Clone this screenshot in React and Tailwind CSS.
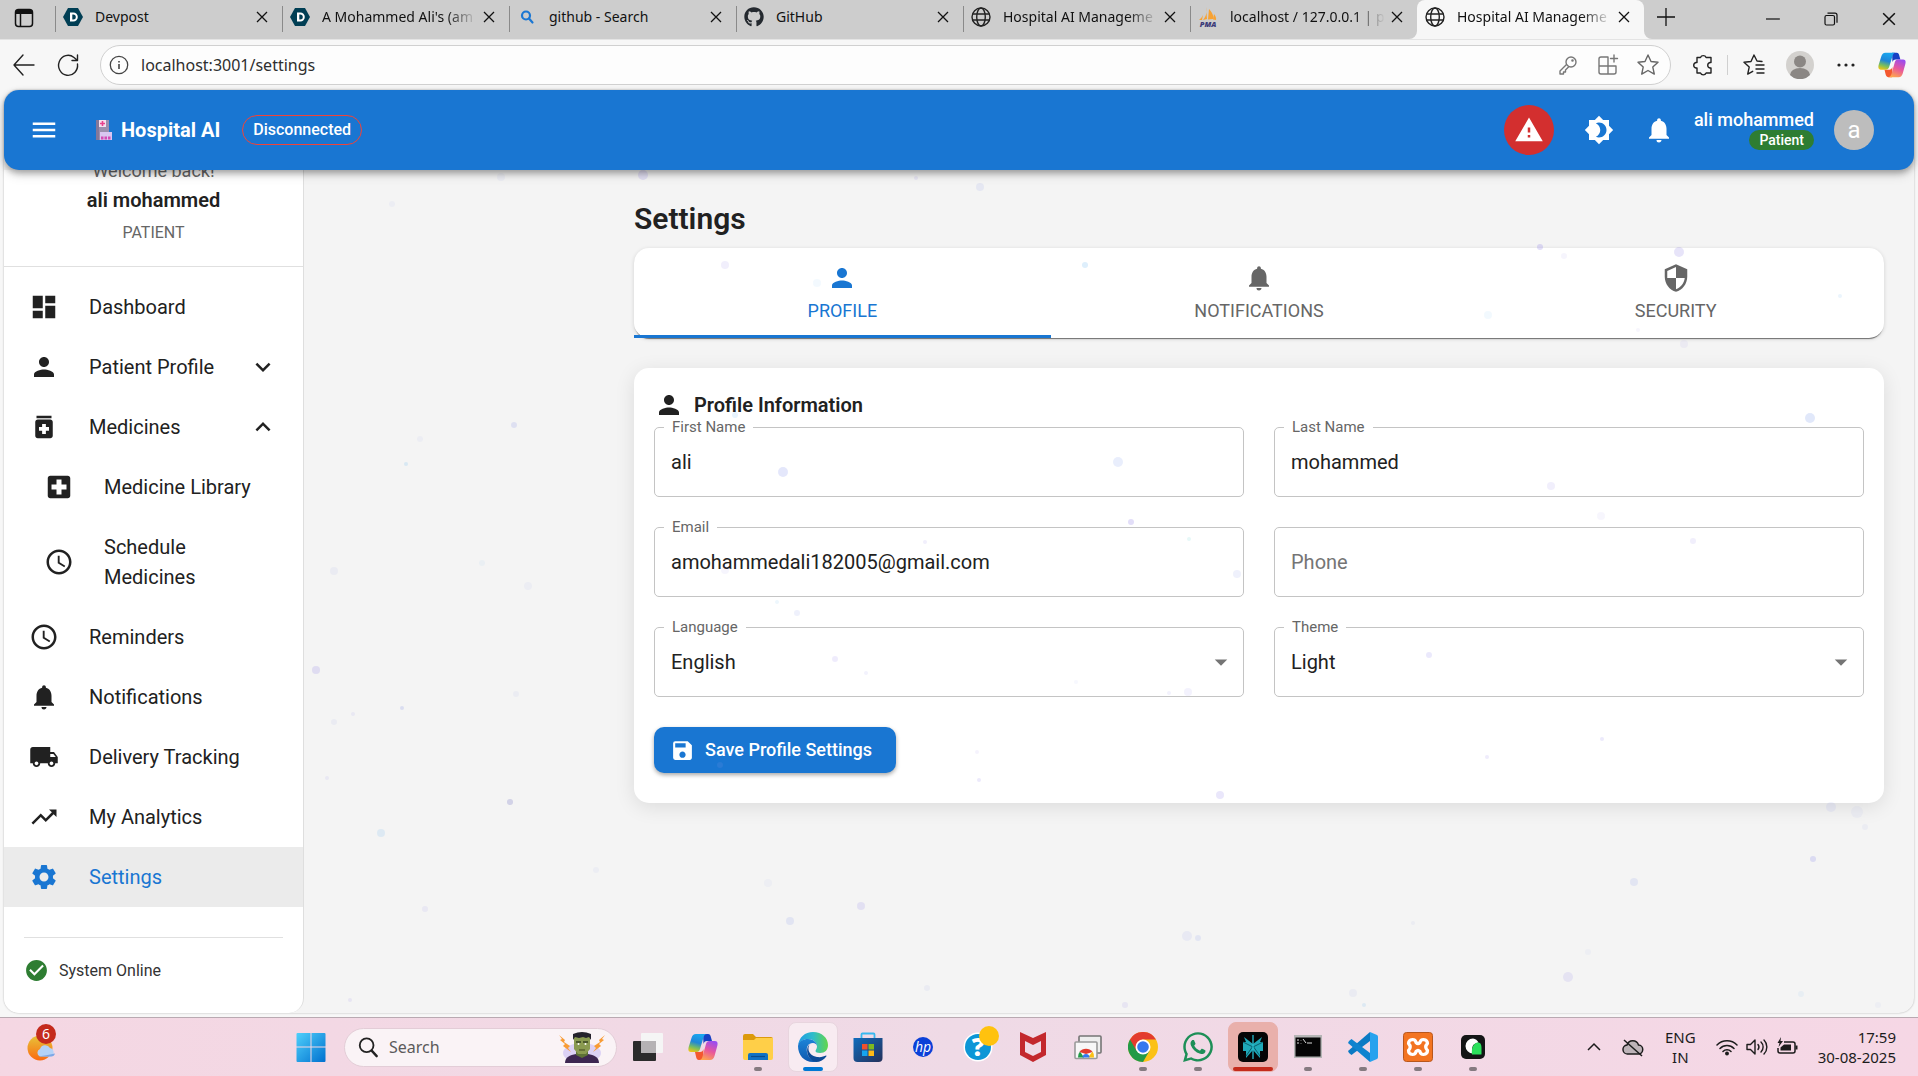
import React, { useState } from 'react';
import {
  MdArrowDropDown,
  MdBrightness4,
  MdCheckCircle,
  MdDashboard,
  MdExpandLess,
  MdExpandMore,
  MdLocalHospital,
  MdLocalShipping,
  MdMedication,
  MdMenu,
  MdNotifications,
  MdPerson,
  MdSave,
  MdSchedule,
  MdSecurity,
  MdSettings,
  MdTrendingUp,
  MdWarning,
} from 'react-icons/md';
import { FaGithub, FaWhatsapp } from 'react-icons/fa';

/* ---------- Browser icons ---------- */

const DevpostIcon = () => (
  <svg viewBox="0 0 20 20" className="size-5">
    <path d="M5 1h10l5 9-5 9H5L0 10z" fill="#003e54" />
    <path d="M7 5.500h3.300a4.500 4.500 0 0 1 0 9H7zM9.300 7.500v5h1a2.500 2.500 0 0 0 0-5z" fill="#fff" fillRule="evenodd" />
  </svg>
);

const SearchFavicon = () => (
  <svg viewBox="0 0 20 20" className="size-5" fill="none" stroke="#1b77d3" strokeWidth="2.200" strokeLinecap="round">
    <circle cx="9" cy="8.500" r="4" />
    <path d="M12 11.500l3.500 4" />
  </svg>
);

const GlobeIcon = () => (
  <svg viewBox="0 0 20 20" className="size-5" fill="none" stroke="#222" strokeWidth="1.400">
    <circle cx="10" cy="10" r="9" />
    <ellipse cx="10" cy="10" rx="4.300" ry="9" />
    <path d="M1.500 7h17M1.500 13h17" />
  </svg>
);

const PmaIcon = () => (
  <svg viewBox="0 0 20 20" className="size-5">
    <path d="M8 0c1 5 .5 9-3 13l4-1zM11 2c3 3 5 7 4 10l-5 .5zM16 7c1.500 2 2.500 4 2 6l-3-.5zM5 8c-1 2-2.500 4-4 5l3 0z" fill="#f7a233" />
    <text x="10" y="19.500" fontSize="7.500" fontWeight="800" fontStyle="italic" textAnchor="middle" fill="#3b3a78" fontFamily="Open Sans, sans-serif">PMA</text>
  </svg>
);

const CloseIcon = ({ className = 'size-3' }) => (
  <svg viewBox="0 0 12 12" className={className} fill="none" stroke="#111" strokeWidth="1.300">
    <path d="M1 1l10 10M11 1L1 11" />
  </svg>
);

const LineIcon = ({ children, color = '#222', className = 'size-6' }) => (
  <svg viewBox="0 0 24 24" className={className} fill="none" stroke={color} strokeWidth="1.400" strokeLinecap="round" strokeLinejoin="round">
    {children}
  </svg>
);

const CopilotIcon = ({ className = 'size-[30px]' }) => (
  <svg viewBox="0 0 30 30" className={className}>
    <defs>
      <linearGradient id="cpLeft" x1="0.500" y1="0" x2="0.200" y2="1">
        <stop offset="0" stopColor="#1aa6ee" />
        <stop offset="0.450" stopColor="#1f86d8" />
        <stop offset="0.750" stopColor="#7cbf5a" />
        <stop offset="1" stopColor="#f2c414" />
      </linearGradient>
      <linearGradient id="cpRight" x1="0.700" y1="0" x2="0.300" y2="1">
        <stop offset="0" stopColor="#9a4cf0" />
        <stop offset="0.500" stopColor="#e8579c" />
        <stop offset="1" stopColor="#ffa64d" />
      </linearGradient>
    </defs>
    <path d="M15 2h5c2 0 2.500 1.500 3 3.500L24 9h-5c-2 0-3 1-3.500 3z" fill="#1740c4" />
    <path d="M15 28h-4c-2 0-2.500-1.500-3-3.500L7 20h5c2 0 3-1 3.500-3z" fill="#f4582f" />
    <path d="M8 2h11c-2 0-3 1.500-3.500 3.500L12 17c-.6 2-1.500 3-3.500 3H3c-3 0-3-3-2-6l2.500-8C4.300 3.500 5.500 2 8 2z" fill="url(#cpLeft)" />
    <path d="M22 28H11c2 0 3-1.500 3.500-3.500L18 12c.6-2 1.500-3 3.500-3H27c3 0 3 3 2 6l-2.500 9c-.8 2.500-2 4-4.500 4z" fill="url(#cpRight)" />
  </svg>
);

/* ---------- Browser chrome ---------- */

const browserTabs = [
  { title: 'Devpost', icon: <DevpostIcon /> },
  { title: "A Mohammed Ali's (am", icon: <DevpostIcon />, faded: true },
  { title: 'github - Search', icon: <SearchFavicon /> },
  { title: 'GitHub', icon: <FaGithub className="size-5 text-[#24292f]" /> },
  { title: 'Hospital AI Manageme', icon: <GlobeIcon />, faded: true },
  { title: 'localhost / 127.0.0.1 | p', icon: <PmaIcon />, faded: true },
  { title: 'Hospital AI Manageme', icon: <GlobeIcon />, faded: true, active: true },
];

const BrowserTab = ({ tab }) => (
  <div
    className={`relative flex h-full w-[227px] min-w-0 items-center pb-1.5 pl-2 pr-3.5 ${
      tab.active ? 'rounded-t-lg bg-[#f7f7f7]' : ''
    }`}
  >
    {!tab.active && <span className="absolute left-0 top-1.5 h-[26px] w-px bg-[#8a8a8a]" />}
    {tab.active && (
      <>
        <svg viewBox="0 0 8 8" className="absolute -left-2 bottom-0 size-2"><path d="M8 0v8H0a8 8 0 0 0 8-8z" fill="#f7f7f7" /></svg>
        <svg viewBox="0 0 8 8" className="absolute -right-2 bottom-0 size-2"><path d="M0 0v8h8a8 8 0 0 1-8-8z" fill="#f7f7f7" /></svg>
      </>
    )}
    <span className="shrink-0">{tab.icon}</span>
    <span
      className={`ml-3 mr-1.5 flex-1 overflow-hidden whitespace-nowrap ${
        tab.faded ? '[mask-image:linear-gradient(to_right,#000_80%,transparent)]' : ''
      }`}
    >
      {tab.title}
    </span>
    <button aria-label="Close tab" className="shrink-0"><CloseIcon /></button>
  </div>
);

const TabStrip = () => (
  <div className="flex h-[39px] items-center bg-[#cdcdcd] font-['Noto_Sans',sans-serif] text-sm text-[#111]">
    <button aria-label="Tab actions" className="flex w-[55px] shrink-0 justify-center pr-2 pb-1">
      <svg viewBox="0 0 20 20" className="size-5" fill="none" stroke="#111" strokeWidth="1.500">
        <rect x="1.500" y="1.500" width="17" height="17" rx="3" />
        <path d="M2 4h16" strokeWidth="4" />
        <path d="M6.500 6v12" />
      </svg>
    </button>
    {browserTabs.map((tab, i) => (
      <BrowserTab key={i} tab={tab} />
    ))}
    <button aria-label="New tab" className="ml-3 shrink-0 pb-1.5">
      <svg viewBox="0 0 20 20" className="size-5" stroke="#111" strokeWidth="1.300"><path d="M1 10h18M10 1v18" /></svg>
    </button>
    <div className="ml-auto flex shrink-0 pb-0.5">
      <button aria-label="Minimize" className="flex w-[58px] justify-center">
        <svg viewBox="0 0 14 14" className="size-3.5" stroke="#111" strokeWidth="1.200"><path d="M0 7h14" /></svg>
      </button>
      <button aria-label="Restore" className="flex w-[58px] justify-center">
        <svg viewBox="0 0 14 14" className="size-3.5" fill="none" stroke="#111" strokeWidth="1.200">
          <rect x="1" y="3.500" width="9.500" height="9.500" rx="1.500" />
          <path d="M3.500 1.200h7.500a2 2 0 0 1 2 2v7.500" />
        </svg>
      </button>
      <button aria-label="Close" className="flex w-[58px] justify-center"><CloseIcon className="size-3.5" /></button>
    </div>
  </div>
);

const AddressBar = () => (
  <div className="flex h-[51px] items-center border-t border-[#e4e4e4] bg-[#f7f7f7] pl-3 pr-3 font-['Noto_Sans',sans-serif]">
    <button aria-label="Back">
      <LineIcon><path d="M22 12H2M11 2L2 12l9 10" /></LineIcon>
    </button>
    <button aria-label="Refresh" className="ml-5">
      <LineIcon><path d="M21.500 11a9.500 10 0 1 1-3.500-6.500L21 7M21.500 2v5.500H16" /></LineIcon>
    </button>
    <div className="ml-5 flex h-10 flex-1 items-center rounded-full border border-[#d0d0d0] bg-[#fdfdfd] pl-2 pr-2.5">
      <svg viewBox="0 0 20 20" className="size-5" fill="none" stroke="#444" strokeWidth="1.300">
        <circle cx="10" cy="10" r="8.700" />
        <path d="M10 9v5M10 6v1.500" strokeWidth="1.600" />
      </svg>
      <input
        aria-label="Address"
        defaultValue="localhost:3001/settings"
        className="ml-3 flex-1 bg-transparent text-base text-[#2e2e2e] outline-none"
      />
      <div className="flex gap-4">
        <LineIcon color="#777">
          <circle cx="15" cy="9" r="5" />
          <circle cx="16.500" cy="7.500" r="0.600" />
          <path d="M10.500 11.500L4 18v3h3.500v-2h2v-2l3-3" />
        </LineIcon>
        <LineIcon color="#777">
          <path d="M12 4H5a2 2 0 0 0-2 2v13a2 2 0 0 0 2 2h13a2 2 0 0 0 2-2v-6H3M12 4v17M18 2v7M14.500 5.500h7" />
        </LineIcon>
        <LineIcon color="#666">
          <path d="M12 2l3 6.500 7 .8-5.200 4.800 1.500 7L12 17.500 5.700 21.100l1.500-7L2 9.300l7-.8z" />
        </LineIcon>
      </div>
    </div>
    <button aria-label="Extensions" className="ml-5">
      <LineIcon>
        <path d="M6 4.500h3.500a3 3 0 0 1 5.600 0H20v5h-1a2.800 2.800 0 0 0 0 5.500h1v5h-4.900a3 3 0 0 1-5.600 0H6v-5H5a2.800 2.800 0 0 1 0-5.500h1z" />
      </LineIcon>
    </button>
    <span className="ml-3 h-5 w-px bg-[#d0d0d0]" />
    <button aria-label="Favorites" className="ml-3.5">
      <LineIcon>
        <path d="M20 8.500l-5-.5-3-6-3 6.500-7 .8 5.200 4.800-1.500 7 5-2.800M14 12h8M14 16h8M15 20h7" />
      </LineIcon>
    </button>
    <svg viewBox="0 0 28 28" className="ml-5 size-7">
      <circle cx="14" cy="14" r="14" fill="#d3d1ce" />
      <circle cx="14" cy="10.500" r="6" fill="#8b8784" />
      <path d="M4 24a10 7 0 0 1 20 0 14 14 0 0 1-20 0z" fill="#8b8784" />
    </svg>
    <button aria-label="More" className="ml-5">
      <svg viewBox="0 0 24 24" className="size-6" fill="#222"><circle cx="5" cy="12" r="1.600" /><circle cx="12" cy="12" r="1.600" /><circle cx="19" cy="12" r="1.600" /></svg>
    </button>
    <button aria-label="Copilot" className="ml-5"><CopilotIcon className="size-7" /></button>
  </div>
);

/* ---------- Application ---------- */

const HospitalIcon = () => (
  <svg viewBox="0 0 18 20" className="h-5 w-[18px]">
    <path d="M1 0h13v20H1z" fill="#9b8fae" />
    <path d="M1 0h3v20H1z" fill="#83789a" />
    <rect x="4" y="0" width="7" height="7" fill="#f6dfee" />
    <path d="M7.500 1v5M5 3.500h5" stroke="#e8408c" strokeWidth="1.600" />
    <rect x="5" y="12" width="12" height="8" fill="#d9c6f2" />
    <path d="M6 18h10" stroke="#d34bb4" strokeWidth="3" strokeDasharray="2.500 1" />
  </svg>
);

const AppHeader = () => (
  <header className="relative z-20 flex h-20 items-center rounded-[15px] bg-[#1976d2] pl-[25px] pr-10 text-white shadow-[0_3px_6px_rgba(0,0,0,0.3),0_5px_12px_rgba(0,0,0,0.12)]">
    <button aria-label="Open menu"><MdMenu className="size-[30px]" /></button>
    <div className="ml-9 flex items-center gap-2">
      <HospitalIcon />
      <span className="text-xl font-bold">Hospital AI</span>
    </div>
    <span className="ml-[22px] flex h-[30px] items-center rounded-full border border-[#f44336] px-2.5 text-base font-medium">
      Disconnected
    </span>
    <div className="ml-auto flex items-center">
      <button aria-label="Emergency" className="flex size-[50px] items-center justify-center rounded-full bg-[#d32f2f]">
        <MdWarning className="size-[30px]" />
      </button>
      <button aria-label="Toggle theme" className="ml-[30px]"><MdBrightness4 className="size-[30px]" /></button>
      <button aria-label="Notifications" className="ml-[30px]"><MdNotifications className="size-[30px]" /></button>
      <div className="ml-5 flex flex-col items-end">
        <span className="text-lg font-medium leading-5">ali mohammed</span>
        <span className="flex h-5 items-center rounded-full bg-[#2e7d32] px-2.5 text-sm font-medium">Patient</span>
      </div>
      <span className="ml-5 flex size-10 items-center justify-center rounded-full bg-[#bdbdbd] text-2xl">a</span>
    </div>
  </header>
);

const menuItems = [
  { label: 'Dashboard', icon: MdDashboard },
  { label: 'Patient Profile', icon: MdPerson, arrow: MdExpandMore },
  { label: 'Medicines', icon: MdMedication, arrow: MdExpandLess },
  { label: 'Medicine Library', icon: MdLocalHospital, nested: true },
  { label: 'Schedule Medicines', icon: MdSchedule, nested: true },
  { label: 'Reminders', icon: MdSchedule },
  { label: 'Notifications', icon: MdNotifications },
  { label: 'Delivery Tracking', icon: MdLocalShipping },
  { label: 'My Analytics', icon: MdTrendingUp },
  { label: 'Settings', icon: MdSettings, selected: true },
];

const Sidebar = () => (
  <aside className="flex w-[300px] shrink-0 flex-col rounded-b-[15px] border-r border-[#dedede] bg-white">
    <div className="border-b border-[#e0e0e0] pb-[17px] text-center text-[#666]">
      <p className="-mt-3 text-lg leading-[25px]">Welcome back!</p>
      <p className="text-xl font-semibold leading-[34px] text-[#212121]">ali mohammed</p>
      <p className="text-base leading-8">PATIENT</p>
    </div>
    <nav className="py-2.5">
      {menuItems.map(({ label, icon: Icon, arrow: Arrow, nested, selected }) => (
        <a
          key={label}
          href="#"
          className={`flex items-center py-[15px] pr-[25px] text-xl leading-[30px] ${nested ? 'pl-10' : 'pl-[25px]'} ${
            selected ? 'bg-[#ebebeb] text-[#1976d2]' : 'text-[#212121]'
          }`}
        >
          <Icon className="size-[30px] shrink-0" />
          <span className="ml-[30px] flex-1">{label}</span>
          {Arrow && <Arrow className="size-[30px]" />}
        </a>
      ))}
    </nav>
    <div className="mx-5 mt-5 flex items-center gap-2.5 border-t border-[#e0e0e0] pt-5 text-base text-[#333]">
      <MdCheckCircle className="size-[25px] text-[#2e7d32]" />
      System Online
    </div>
  </aside>
);

const tabs = [
  { label: 'PROFILE', icon: MdPerson },
  { label: 'NOTIFICATIONS', icon: MdNotifications },
  { label: 'SECURITY', icon: MdSecurity },
];

const SettingsTabs = ({ active, onChange }) => (
  <div role="tablist" className="flex rounded-[15px] bg-white shadow-[0_2px_1px_-1px_rgba(0,0,0,0.5),0_1px_4px_rgba(0,0,0,0.14)]">
    {tabs.map(({ label, icon: Icon }, i) => (
      <button
        key={label}
        role="tab"
        aria-selected={active === i}
        onClick={() => onChange(i)}
        className={`flex h-[90px] flex-1 flex-col items-center border-b-3 pt-[15px] text-lg ${
          active === i ? 'border-[#1976d2] text-[#1976d2]' : 'border-transparent text-[#666]'
        }`}
      >
        <Icon className="size-[30px]" />
        <span className="mt-1">{label}</span>
      </button>
    ))}
  </div>
);

const fieldClass =
  'h-[70px] w-full appearance-none rounded-[5px] border border-[#c4c4c4] bg-white px-4 text-xl text-[#212121] outline-none placeholder:text-[#757575]';

const FieldLabel = ({ id, children }) => (
  <label htmlFor={id} className="absolute -top-2.5 left-2.5 bg-white px-2 text-[15px] leading-5 text-[#666]">
    {children}
  </label>
);

const TextField = ({ id, label, value }) => (
  <div className="relative">
    <FieldLabel id={id}>{label}</FieldLabel>
    <input id={id} defaultValue={value} className={fieldClass} />
  </div>
);

const SelectField = ({ id, label, options }) => (
  <div className="relative">
    <FieldLabel id={id}>{label}</FieldLabel>
    <select id={id} className={fieldClass}>
      {options.map((option) => (
        <option key={option}>{option}</option>
      ))}
    </select>
    <MdArrowDropDown className="pointer-events-none absolute right-2 top-5 size-[30px] text-[#757575]" />
  </div>
);

const ProfileForm = () => (
  <form className="mt-[30px] rounded-[15px] bg-white px-5 pb-[30px] pt-5 shadow-[0_4px_20px_rgba(0,0,0,0.1)]">
    <h2 className="flex h-[39px] items-center gap-2.5 pb-1.5 text-xl font-semibold text-[#212121]">
      <MdPerson className="size-[30px]" />
      Profile Information
    </h2>
    <div className="grid grid-cols-2 gap-[30px]">
      <TextField id="firstName" label="First Name" value="ali" />
      <TextField id="lastName" label="Last Name" value="mohammed" />
      <TextField id="email" label="Email" value="amohammedali182005@gmail.com" />
      <input aria-label="Phone" type="tel" placeholder="Phone" className={fieldClass} />
      <SelectField id="language" label="Language" options={['English']} />
      <SelectField id="theme" label="Theme" options={['Light']} />
    </div>
    <button
      type="button"
      className="mt-[30px] flex h-[46px] items-center gap-2.5 rounded-[10px] bg-[#1976d2] pl-4 pr-6 text-lg font-medium text-white shadow-[0_2px_4px_rgba(0,0,0,0.35)]"
    >
      <MdSave className="size-[25px]" />
      Save Profile Settings
    </button>
  </form>
);

// [x, y, radius, colour, opacity]
const particles = [
  [643, 175, 5, '#8b7be8', 0.18], [916, 178, 2, '#8b7be8', 0.12], [980, 187, 4, '#7b8be8', 0.12],
  [501, 177, 4, '#7b8be8', 0.07], [392, 204, 3, '#7b8be8', 0.06], [725, 265, 4, '#8b7be8', 0.12],
  [817, 283, 4, '#5bb0f0', 0.07], [1085, 265, 3, '#5bb0f0', 0.2], [1540, 247, 3, '#8b7be8', 0.25],
  [1564, 256, 3, '#8b7be8', 0.08], [1679, 252, 5, '#7a68e0', 0.18], [1840, 296, 2, '#5bb0f0', 0.12],
  [1488, 315, 4, '#5bb0f0', 0.08], [1638, 330, 2, '#8b7be8', 0.07], [1684, 344, 4, '#8b7be8', 0.08],
  [420, 439, 3, '#7b8be8', 0.06], [406, 464, 2, '#5bb0f0', 0.18], [514, 425, 3, '#5a6be0', 0.14],
  [334, 571, 4, '#7b8be8', 0.08], [482, 563, 3, '#5bb0f0', 0.06], [528, 586, 4, '#7b8be8', 0.06],
  [316, 670, 4, '#8b7be8', 0.2], [402, 708, 2, '#5a6be0', 0.16], [353, 714, 2, '#8b7be8', 0.1],
  [334, 722, 3, '#7b8be8', 0.08], [516, 694, 3, '#7b8be8', 0.07], [327, 778, 2, '#8b7be8', 0.1],
  [510, 802, 3, '#6a6cc0', 0.25], [381, 833, 4, '#5bb0f0', 0.15], [425, 909, 3, '#8b7be8', 0.1],
  [596, 870, 3, '#7b8be8', 0.06], [768, 883, 4, '#7b8be8', 0.05], [790, 921, 4, '#7b8be8', 0.15],
  [861, 906, 4, '#7b6be8', 0.14], [350, 1000, 2, '#8b7be8', 0.12], [927, 988, 3, '#7b8be8', 0.08],
  [1187, 936, 5, '#7b8be8', 0.1], [1198, 938, 3, '#7b8be8', 0.14], [1125, 1005, 3, '#8b7be8', 0.12],
  [1353, 993, 4, '#7b8be8', 0.08], [1364, 1005, 2, '#5bb0f0', 0.15], [1568, 977, 5, '#7b6be8', 0.12],
  [1588, 952, 3, '#7b8be8', 0.05], [1634, 882, 4, '#7b8be8', 0.14], [1413, 923, 2, '#7b8be8', 0.07],
  [1813, 859, 3, '#6b6be8', 0.18], [1831, 807, 5, '#7b8be8', 0.1], [1857, 812, 6, '#7b8be8', 0.06],
  [1865, 827, 3, '#7b8be8', 0.07], [1801, 994, 3, '#5bb0f0', 0.07], [1878, 1005, 3, '#7b8be8', 0.05],
  [1810, 418, 5, '#6b8be8', 0.2], [783, 472, 5, '#6b7be8', 0.18], [1118, 462, 5, '#6b8be8', 0.15],
  [1551, 486, 4, '#8b7be8', 0.12], [1601, 516, 4, '#8b7be8', 0.07], [1131, 522, 3, '#7a68e0', 0.22],
  [1189, 539, 2, '#5bd0d0', 0.15], [1237, 574, 4, '#7b8be8', 0.12], [925, 542, 2, '#8b7be8', 0.12],
  [725, 570, 4, '#8b7be8', 0.08], [777, 602, 2, '#5bb0f0', 0.1], [797, 613, 3, '#7b8be8', 0.12],
  [735, 415, 3, '#5bb0f0', 0.15], [1693, 541, 3, '#8b7be8', 0.12], [835, 659, 3, '#8b7be8', 0.14],
  [866, 673, 2, '#8b7be8', 0.1], [1076, 682, 2, '#7b8be8', 0.06], [1188, 692, 4, '#8b7be8', 0.1],
  [1169, 693, 2, '#8b7be8', 0.1], [1429, 655, 3, '#7b6be8', 0.15], [1602, 739, 2, '#7b6be8', 0.14],
  [1487, 757, 2, '#8b7be8', 0.14], [979, 780, 2, '#8b7be8', 0.16], [977, 752, 2, '#8b7be8', 0.09],
  [1220, 795, 4, '#7b6be8', 0.16], [720, 765, 3, '#8b9be8', 0.15],
];

const Particles = () => (
  <svg className="pointer-events-none absolute inset-0 z-10 size-full">
    {particles.map(([x, y, r, fill, opacity], i) => (
      <circle key={i} cx={x} cy={y} r={r} fill={fill} opacity={opacity} />
    ))}
  </svg>
);

/* ---------- Taskbar ---------- */

const WindowsIcon = () => (
  <svg viewBox="0 0 30 30" className="size-[30px]">
    <defs>
      <linearGradient id="win" x1="0" y1="0" x2="1" y2="1"><stop stopColor="#4fd0fb" /><stop offset="1" stopColor="#0070cf" /></linearGradient>
    </defs>
    <path d="M1.500 1h13v13.500H.5V2q0-1 1-1zM15.500 1h13q1 0 1 1v12.500h-14zM.5 15.500h14V30h-13q-1 0-1-1zM15.500 15.500h14V29q0 1-1 1h-13z" fill="url(#win)" />
  </svg>
);

const WeatherIcon = () => (
  <svg viewBox="0 0 30 30" className="size-[30px]">
    <defs>
      <linearGradient id="sun" x1="0" y1="0" x2="0" y2="1"><stop stopColor="#e7c43a" /><stop offset="1" stopColor="#fb6a10" /></linearGradient>
    </defs>
    <circle cx="14" cy="16" r="12.500" fill="url(#sun)" />
    <path d="M14 24.500a4 4 0 0 1 0-7.500 5.500 5.500 0 0 1 10-1 4.500 4.500 0 0 1 1 8.500z" fill="#b4d3f7" />
    <path d="M12 24.500q8-1 17-3a4 4 0 0 1-4 3z" fill="#7ea8e6" />
  </svg>
);

const MonsterIcon = () => (
  <svg viewBox="0 0 48 32" className="h-8 w-12">
    <ellipse cx="24" cy="22" rx="19" ry="10" fill="#b9a8f5" opacity="0.450" />
    <path d="M1 4l6 5-1 2 6 4-2 2 3 4-8-6 2-2-5-4 2-1zM47 4l-6 5 1 2-6 4 2 2-3 4 8-6-2-2 5-4-2-1z" fill="#f89c35" />
    <path d="M7 32c0-6 5-8 11-9h12c6 1 11 3 11 9z" fill="#3d2651" />
    <path d="M18 18h12v6l-6 3-6-3z" fill="#5d7036" />
    <path d="M16 6h16v12l-4 5h-8l-4-5z" fill="#8a9a50" />
    <path d="M15 9V3q9-4 18 0v6l-2-3-3 1-3-1-4 1-4-1z" fill="#25222c" />
    <path d="M18 11h5M25 11h5" stroke="#3a4522" strokeWidth="1.500" />
    <circle cx="20.500" cy="13" r="1" fill="#fff" />
    <circle cx="27.500" cy="13" r="1" fill="#fff" />
    <path d="M21 19h6" stroke="#4c5527" strokeWidth="1.200" />
  </svg>
);

const TaskViewIcon = () => (
  <svg viewBox="0 0 30 30" className="size-[30px]">
    <rect x="0" y="9" width="23" height="20" rx="1" fill="#2b2b2b" />
    <rect x="8" y="1" width="22" height="20" rx="1" fill="#f5f5f5" />
    <path d="M8 9h15v12H8z" fill="#b5b2b4" />
  </svg>
);

const FolderIcon = () => (
  <svg viewBox="0 0 30 30" className="size-[30px]">
    <path d="M0 4q0-2 2-2h8l3 3h15q2 0 2 2v8H0z" fill="#dc9a0c" />
    <path d="M0 8h11l2-2h17v20q0 2-2 2H2q-2 0-2-2z" fill="#ffcf48" />
    <path d="M5 28v-5q0-2 2-2h16q2 0 2 2v5z" fill="#1272c4" />
    <path d="M8 24.500h14" stroke="#0b4c8c" strokeWidth="1.200" />
  </svg>
);

const EdgeIcon = () => (
  <svg viewBox="0 0 30 30" className="size-[30px]">
    <defs>
      <linearGradient id="edgeTop" x1="0" y1="0.500" x2="1" y2="0.500"><stop stopColor="#1f9be4" /><stop offset="0.500" stopColor="#2fbccb" /><stop offset="1" stopColor="#63d64b" /></linearGradient>
      <linearGradient id="edgeLow" x1="0" y1="0" x2="0" y2="1"><stop stopColor="#1c84d8" /><stop offset="1" stopColor="#0f58ae" /></linearGradient>
    </defs>
    <path d="M0 14C1 5 7 0 15 0c9 0 15 6 15 13 0 5-3 8-8 8-3 0-4.500-1-4.500-2s1.500-2 1.500-4.500C19 10 15 7 10 7 5 7 1 10 0 14z" fill="url(#edgeTop)" />
    <path d="M0 14c1-5 5-7 10-7 6 0 9 4 9 7.500 0-2-2-3.500-4-3.500-5 0-7 4-6 9 1 6 6 9 11 9-2 .8-3.500 1-5 1C6 30 0 23 0 14z" fill="url(#edgeLow)" />
    <path d="M13 11.500c-4 2-4 12 6 13.500 4 .5 7-.5 9-1.500.5 0 .5.500.3 1C26 28 22 30 18 30 9 28 6 15 13 11.500z" fill="#0c4a96" />
  </svg>
);

const StoreIcon = () => (
  <svg viewBox="0 0 30 30" className="size-[30px]">
    <defs>
      <linearGradient id="store" x1="0" y1="0" x2="1" y2="1"><stop stopColor="#0f6cbd" /><stop offset="1" stopColor="#25305a" /></linearGradient>
    </defs>
    <path d="M8.500 7V2.500q0-1 1-1h11q1 0 1 1V7" fill="none" stroke="#36b8ef" strokeWidth="1.800" />
    <path d="M.5 6h29v20q0 4-4 4h-21q-4 0-4-4z" fill="url(#store)" />
    <path d="M9 12h5.500v5.500H9z" fill="#f2502c" /><path d="M15.500 12H21v5.500h-5.500z" fill="#7fba1e" />
    <path d="M9 18.500h5.500V24H9z" fill="#16a5ef" /><path d="M15.500 18.500H21V24h-5.500z" fill="#ffb916" />
  </svg>
);

const HpIcon = () => (
  <svg viewBox="0 0 30 30" className="size-[30px]">
    <circle cx="15" cy="15" r="10" fill="#0b40d8" />
    <text x="15" y="19.500" fontSize="14" fontWeight="500" fontStyle="italic" textAnchor="middle" fill="#fff" fontFamily="Open Sans, sans-serif">hp</text>
  </svg>
);

const HelpIcon = () => (
  <svg viewBox="0 0 30 30" className="size-[30px] overflow-visible">
    <circle cx="15" cy="15" r="14.500" fill="#fff" />
    <circle cx="15" cy="15" r="13" fill="#0d96d6" />
    <text x="15" y="24" fontSize="25" fontWeight="800" textAnchor="middle" fill="#fff" fontFamily="Open Sans, sans-serif">?</text>
    <circle cx="26" cy="4" r="10" fill="#ffc20e" />
  </svg>
);

const McAfeeIcon = () => (
  <svg viewBox="0 0 30 30" className="size-[30px]">
    <path d="M2 0l13 6 13-6v23l-13 7-13-7zM7 9v11l8 4 8-4V9l-8 4z" fill="#c3282d" fillRule="evenodd" />
  </svg>
);

const ChromeIcon = () => (
  <svg viewBox="0 0 30 30" className="size-[30px]">
    <circle cx="15" cy="15" r="15" fill="#fbc116" />
    <path d="M2 7.500A15 15 0 0 0 15 30l6.500-11.300L15 15z" fill="#229a48" />
    <path d="M2 7.500L8.500 18.700 15 15 14 7.500 28 7.500A15 15 0 0 0 2 7.500z" fill="#e33b2e" />
    <circle cx="15" cy="15" r="7.500" fill="#fff" />
    <circle cx="15" cy="15" r="5.800" fill="#3478ee" />
  </svg>
);

const RemoteIcon = () => (
  <svg viewBox="0 0 30 30" className="size-[30px]">
    <rect x="6" y="4" width="22" height="17" rx="1" fill="#eee" stroke="#757575" strokeWidth="1.600" />
    <rect x="2" y="10" width="22" height="16.500" rx="1" fill="#f7f7f7" stroke="#9a9a9a" strokeWidth="1.600" />
    <path d="M5 25.500a8 8 0 0 1 2-6l4 6z" fill="#229a48" />
    <path d="M6.500 20a8 8 0 0 1 13 0l-6.500 2z" fill="#e33b2e" />
    <path d="M19.500 19.500a8 8 0 0 1 1.500 6h-6z" fill="#fbc116" />
    <path d="M9.500 25.500a3.500 3.500 0 0 1 7 0z" fill="#3478ee" />
  </svg>
);

const PerplexityIcon = () => (
  <svg viewBox="0 0 30 30" className="size-[30px]">
    <rect width="30" height="30" rx="5" fill="#050505" />
    <path d="M6 5l9 7v6l-7 8v-7H5v-9h3zM24 5l-9 7v6l7 8v-7h3v-9h-3z" fill="#1fa9b8" />
    <path d="M5 10l10 5 10-5M8 24l7-10 7 10" stroke="#0b5f6c" strokeWidth="1" fill="none" />
    <path d="M15 3v24" stroke="#26bfd0" strokeWidth="1.300" />
  </svg>
);

const TerminalIcon = () => (
  <svg viewBox="0 0 30 30" className="size-[30px]">
    <rect x="1" y="3" width="28" height="23" fill="#b5b5b5" />
    <rect x="2.500" y="5.500" width="25" height="19" fill="#050505" />
    <path d="M4 8h2M4 11h2M8 8v.5M8 11v.5M10 7l3 4M14 11h5" stroke="#ddd" strokeWidth="1" />
  </svg>
);

const VsCodeIcon = () => (
  <svg viewBox="0 0 30 30" className="size-[30px]">
    <path d="M22 0L0 19l1 2 2.500 2L22 9z" fill="#0b7ac4" />
    <path d="M22 30L0 11l1-2 2.500-2L22 21z" fill="#0f83cf" />
    <path d="M22 0l7 3q1 .5 1 2v20q0 1.500-1 2l-7 3z" fill="#27a2ee" />
  </svg>
);

const XamppIcon = () => (
  <svg viewBox="0 0 30 30" className="size-[30px]">
    <rect x="0.500" y="0.500" width="29" height="29" rx="3" fill="#f37421" stroke="#b8571c" />
    <path d="M9.500 7.500q3 0 3.500 3 2 2 4 0 .5-3 3.500-3 4 .5 4 4-3.500 3.500 0 7 0 3.500-4 4-3 0-3.500-3-2-2-4 0-.5 3-3.500 3-4-.5-4-4 3.500-3.500 0-7 0-3.500 4-4z" fill="none" stroke="#fff" strokeWidth="3.200" strokeLinejoin="round" />
  </svg>
);

const LensIcon = () => (
  <svg viewBox="0 0 30 30" className="size-[30px]">
    <rect x="3" y="3" width="24" height="24" rx="5" fill="#141516" />
    <path d="M15 6.500a7.500 7.500 0 1 0 0 15c-2-7 0-10 5.500-11A7.500 7.500 0 0 0 15 6.500z" fill="#fff" />
    <path d="M14 22.500c-1-7 2-12 6-12 3 0 3.500 3 3.500 6v5.500q0 .500-.5 .500z" fill="#2be05c" />
  </svg>
);

const taskbarApps = [
  { name: 'Task view', icon: <TaskViewIcon /> },
  { name: 'Copilot', icon: <CopilotIcon /> },
  { name: 'File Explorer', icon: <FolderIcon />, running: true },
  { name: 'Edge', icon: <EdgeIcon />, focused: true },
  { name: 'Store', icon: <StoreIcon /> },
  { name: 'HP', icon: <HpIcon /> },
  { name: 'Help', icon: <HelpIcon /> },
  { name: 'McAfee', icon: <McAfeeIcon /> },
  { name: 'Remote Desktop', icon: <RemoteIcon /> },
  { name: 'Chrome', icon: <ChromeIcon />, running: true },
  { name: 'WhatsApp', icon: <FaWhatsapp className="size-[34px] text-[#1d8f57]" />, running: true },
  { name: 'Perplexity', icon: <PerplexityIcon />, alert: true },
  { name: 'Terminal', icon: <TerminalIcon />, running: true },
  { name: 'VS Code', icon: <VsCodeIcon />, running: true },
  { name: 'XAMPP', icon: <XamppIcon />, running: true },
  { name: 'Lens', icon: <LensIcon />, running: true },
];

const getTileClass = (app) => {
  if (app.focused) return 'bg-[#f8ebf1] border-[#e8d5de]';
  if (app.alert) return 'bg-[#e9b0ab] border-[#e9b0ab]';
  return 'border-transparent';
};

const TaskbarApp = ({ app }) => (
  <button
    aria-label={app.name}
    className={`relative flex size-[50px] shrink-0 items-center justify-center rounded-lg border ${getTileClass(app)}`}
  >
    {app.icon}
    {app.running && <span className="absolute bottom-0 h-1 w-2 rounded-full bg-[#857a80]" />}
    {app.focused && <span className="absolute bottom-0 h-1 w-5 rounded-full bg-[#0078d4]" />}
    {app.alert && <span className="absolute bottom-0 h-1 w-10 rounded-full bg-[#c42b1c]" />}
  </button>
);

const Taskbar = () => (
  <footer className="flex h-[59px] items-center border-t border-[#b9a9b1] bg-linear-to-r from-[#f5d7e3] via-[#efdae6] to-[#f6d7e5] font-['Noto_Sans',sans-serif] text-[15px] text-[#1c1c1c]">
    <button aria-label="Weather" className="relative ml-[26px] shrink-0">
      <WeatherIcon />
      <span className="absolute -top-2 right-0 flex size-5 items-center justify-center rounded-full bg-[#c42b1c] text-sm text-white">6</span>
    </button>
    <button aria-label="Start" className="ml-60 shrink-0"><WindowsIcon /></button>
    <div className="ml-[18px] flex h-[39px] w-[273px] shrink-0 items-center rounded-full border border-[#e3cdd7] bg-[#faf3f6] pl-3 pr-2.5">
      <svg viewBox="0 0 24 24" className="size-[22px] shrink-0" fill="none" stroke="#222" strokeWidth="2" strokeLinecap="round">
        <circle cx="10.500" cy="10" r="7.500" />
        <path d="M16 16l5.500 6" strokeWidth="2.600" />
      </svg>
      <input aria-label="Search" placeholder="Search" className="ml-2.5 min-w-0 flex-1 bg-transparent text-base outline-none placeholder:text-[#5c5a5b]" />
      <MonsterIcon />
    </div>
    <div className="ml-1.5 flex gap-[5px]">
      {taskbarApps.map((app) => (
        <TaskbarApp key={app.name} app={app} />
      ))}
    </div>
    <div className="ml-auto flex items-center pr-[22px]">
      <svg viewBox="0 0 14 14" className="size-3.5" fill="none" stroke="#1c1c1c" strokeWidth="1.500"><path d="M1 10l6-6 6 6" /></svg>
      <svg viewBox="0 0 24 24" className="ml-5 size-6" fill="none" stroke="#1c1c1c" strokeWidth="1.500">
        <path d="M7 19a4.500 4.500 0 0 1-1-9 6 6 0 0 1 11.500 0A4.500 4.500 0 0 1 17 19z" fill="#bdb3b8" />
        <path d="M3 5l18 16" />
      </svg>
      <div className="ml-5 text-center leading-5">
        <p>ENG</p>
        <p>IN</p>
      </div>
      <div className="ml-5 flex items-center gap-2">
        <svg viewBox="0 0 22 22" className="size-[22px]" fill="none" stroke="#1c1c1c" strokeWidth="1.500" strokeLinecap="round">
          <path d="M1 9a14 14 0 0 1 20 0M4 12.500a9.500 9.500 0 0 1 14 0M7 15.500a5.500 5.500 0 0 1 8 0" />
          <circle cx="11" cy="17.500" r="1.200" fill="#1c1c1c" />
        </svg>
        <svg viewBox="0 0 22 22" className="size-[22px]" fill="none" stroke="#1c1c1c" strokeWidth="1.400" strokeLinecap="round" strokeLinejoin="round">
          <path d="M1 8.500h3.500L9 4v14l-4.500-4.500H1zM12 8.500a4 4 0 0 1 0 5M15 6a7 7 0 0 1 0 10M18 4a10 10 0 0 1 0 14" />
        </svg>
        <svg viewBox="0 0 22 22" className="size-[22px]" fill="none" stroke="#1c1c1c" strokeWidth="1.500">
          <path d="M8 6h9a2 2 0 0 1 2 2v7a2 2 0 0 1-2 2H4a2 2 0 0 1-2-2v-3" />
          <path d="M20.500 9.500v4" strokeWidth="2" />
          <path d="M8 8.500h7v6H4.500v-3z" fill="#1c1c1c" stroke="none" />
          <path d="M5 1L1.500 7h2l-1 4L7 5H4.500z" fill="#1c1c1c" stroke="none" />
        </svg>
      </div>
      <div className="ml-5 text-right leading-5">
        <p>17:59</p>
        <p>30-08-2025</p>
      </div>
    </div>
  </footer>
);

const App = () => {
  const [activeTab, setActiveTab] = useState(0);

  return (
    <div className="relative flex min-h-screen flex-col bg-[#f7f7f7] font-[Roboto,sans-serif]">
      <TabStrip />
      <AddressBar />
      <div className="mx-1 mb-1 flex flex-1 flex-col rounded-[15px] bg-[#f4f4f4] shadow-[0_0_2px_rgba(0,0,0,0.3)]">
        <AppHeader />
        <div className="flex flex-1">
          <Sidebar />
          <main className="flex-1 pl-[330px] pr-[30px] pt-[30px]">
            <h1 className="mb-2.5 text-3xl font-semibold leading-[38px] text-[#212121]">Settings</h1>
            <SettingsTabs active={activeTab} onChange={setActiveTab} />
            <ProfileForm />
          </main>
        </div>
      </div>
      <Particles />
      <Taskbar />
    </div>
  );
};

export default App;
